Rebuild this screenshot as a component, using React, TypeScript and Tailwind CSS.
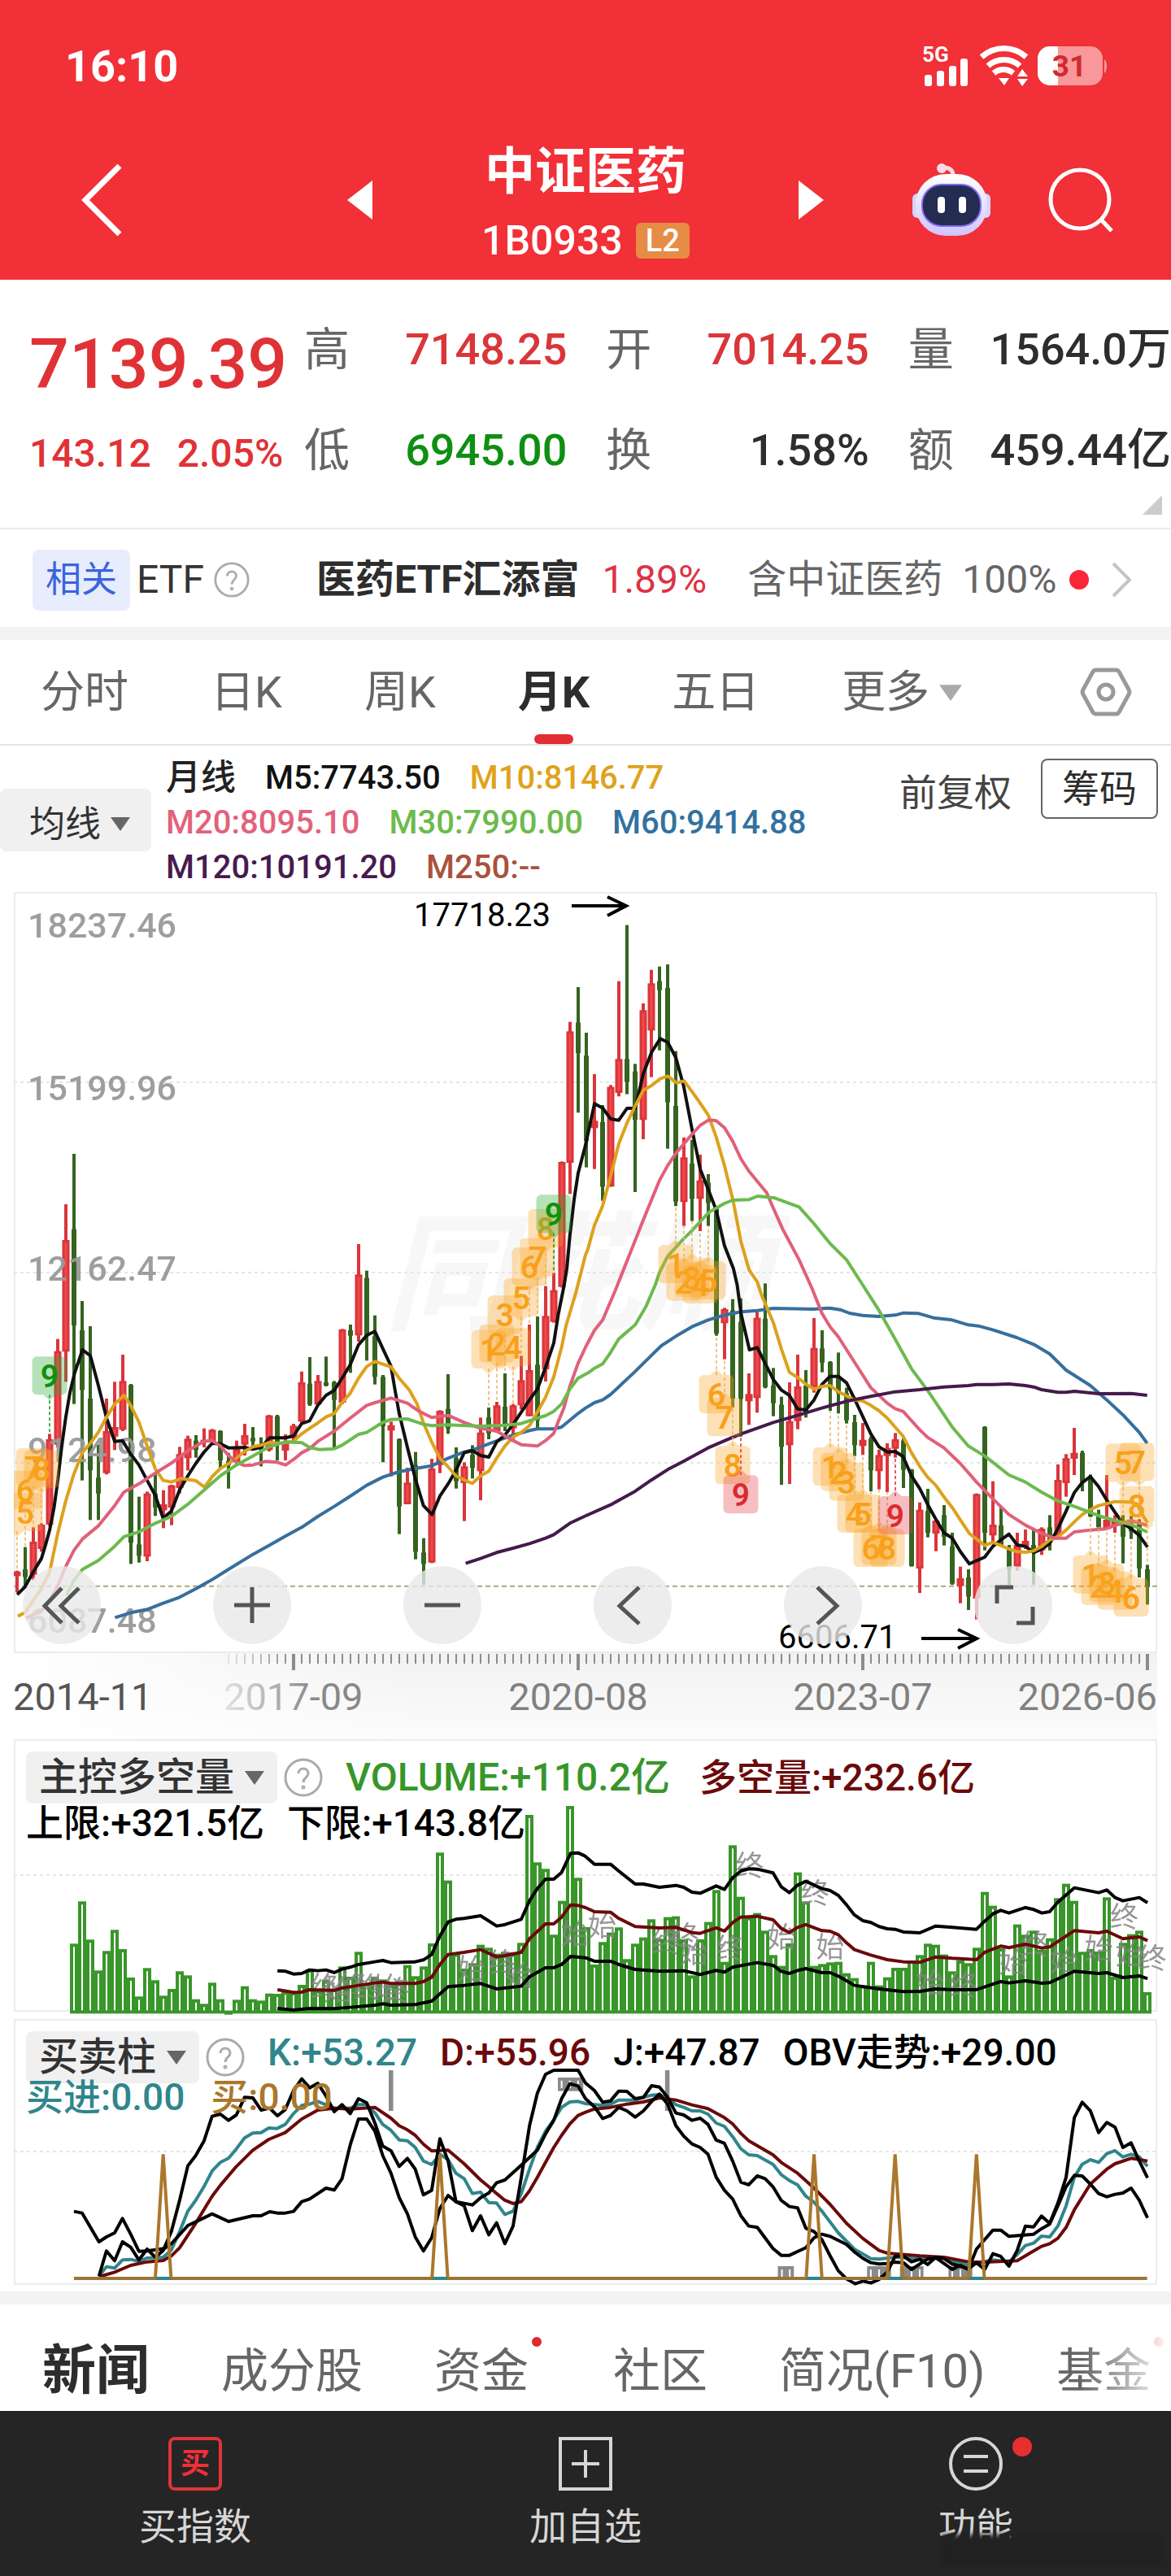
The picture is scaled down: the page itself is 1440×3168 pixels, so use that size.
import clsx from "clsx";
import type { ReactNode } from "react";

// One candle per month: colour, high, body top, body bottom, low
const CANDLES = `r 1055 1058 1075 1135;g 968 1050 1078 1110;r 895 948 1070 1090;r 880 885 975 985;r 550 570 885 890
r 200 245 590 600;r -297 -165 247 358;g -483 -205 150 440;g 60 168 388 722;g 153 420 685 868
g 590 712 770 868;r 420 540 695 700;r 358 525 560 610;r 258 355 535 540;g 366 370 952 1030
g 782 958 1000 1025;r 763 770 1003 1020;g 700 770 822 853;r 758 810 832 898;r 738 740 822 887
r 598 625 750 770;r 557 568 640 685;g 555 575 610 638;r 530 572 582 600;r 532 535 580 590
g 537 540 648 680;g 620 650 665 752;r 575 605 655 665;r 513 555 590 630;g 525 565 578 605
g 563 590 605 670;r 480 482 610 615;g 480 485 590 648;r 552 585 612 648;r 513 520 565 575
r 320 360 505 510;g 267 365 442 447;r 333 355 442 445;g 265 360 372 375;g 355 360 425 608
r 163 165 435 440;g 147 168 188 325;r -150 -38 187 210;g -52 -25 190 280;g 113 190 340 368
g 333 340 522 655;r 505 518 538 707;g 567 570 818 920;r 675 730 810 810;g 617 665 985 1013
g 935 988 1030 1107;r 642 678 1025 1027;r 463 465 665 695;g 330 458 530 550;g 600 640 725 752
r 655 670 732 872;g 592 628 675 715;r 490 545 688 795;g 453 490 548 570;r 432 445 540 545
g 327 450 520 540;r 440 445 530 575;r 262 352 445 460;r 147 315 485 485;g 117 295 500 530
r 5 115 312 357;r -43 20 137 140;r -455 -453 8 10;r -970 -935 -450 -335;g -1098 -967 -855 -635
g -930 -845 -530 -433;r -777 -605 -578 -427;g -663 -600 -362 -310;r -737 -730 -362 -362;r -1120 -833 -708 -695
g -1327 -833 -748 -703;g -815 -787 -608 -342;r -1038 -1013 -608 -537;r -1162 -1112 -938 -766;g -1174 -1120 -1087 -865
g -1182 -1095 -673 -502;g -862 -660 -307 -290;r -543 -470 -305 -217;g -535 -447 -317 -235;r -480 -385 -317 -198
g -408 -377 -302 -217;g -290 -288 180 188;r 85 90 142 275;g 53 95 420 453;g 50 137 420 560
r 327 403 430 517;r 95 122 418 472;g -5 125 378 382;g 307 372 437 485;g 413 443 598 738
r 360 503 592 735;r 258 375 503 533;g 315 372 475 490;r 123 233 380 398;g 168 235 287 323
g 282 285 385 465;g 250 345 400 475;g 380 400 500 512;g 480 507 592 632;r 510 572 595 628
g 560 568 685 762;r 608 628 688 755;r 585 602 632 765;r 547 570 605 638;g 567 575 683 750
g 680 683 1038 1040;r 803 830 1047 1137;g 753 835 915 932;r 865 870 918 983;g 813 850 930 962
g 915 965 1103 1107;r 1040 1083 1112 1175;g 1050 1080 1150 1200;r 770 772 1158 1235;g 522 525 915 980
r 725 885 925 950;g 822 888 965 965;g 960 975 1050 1107;r 915 960 1040 1055;r 903 945 965 975
g 900 960 985 1107;r 895 900 980 997;g 850 895 945 980;r 663 720 925 930;r 625 640 732 782
r 528 620 642 702;g 612 620 728 762;g 700 708 855 857;g 830 850 895 895;r 702 867 897 900
r 850 868 888 915;g 850 885 930 1028;g 853 880 910 938;g 865 875 1047 1080;g 1033 1050 1115 1180`
  .split(/[;\n]/)
  .map((row) => {
    const [color, ...values] = row.trim().split(" ");
    const [high, top, bottom, low] = values.map(Number);
    return { up: color === "r", high, top, bottom, low };
  });

const AVERAGES = [
  {
    color: "#376f9c",
    points:
      "308,1228 350,1210 394,1198 437,1175 481,1153 524,1122 568,1088 612,1050 677,995 720,962 764,928 808,895 851,855 895,818 938,780 982,740 1025,710 1069,690 1112,678 1156,668 1200,640 1243,617 1265,610 1309,587 1374,555 1418,538 1439,532 1483,532 1504,525 1548,475 1568,455 1592,435 1614,425 1635,405 1701,320 1745,260 1771,225 1810,190 1853,155 1896,130 1940,112 1985,100 2028,95 2071,87 2180,90 2223,86 2250,92 2275,105 2310,113 2354,117 2397,112 2420,104 2460,106 2500,122 2550,130 2593,148 2620,152 2660,167 2723,195 2768,220 2811,255 2855,315 2920,372 2964,425 3007,480 3051,545 3072,585",
  },
  {
    color: "#111111",
    points:
      "46,1143 67,1115 89,1060 111,1010 122,960 133,905 145,820 155,720 165,600 176,490 187,400 200,325 221,240 242,262 263,370 285,490 307,578 328,575 350,625 372,665 394,722 416,778 437,862 459,835 481,757 503,705 524,660 546,618 568,585 590,587 612,602 655,600 677,607 699,600 722,565 764,565 786,558 808,512 829,502 851,445 873,408 895,390 916,345 938,295 960,222 982,187 1004,172 1025,235 1047,300 1058,390 1069,475 1091,600 1112,715 1134,815 1157,848 1178,780 1200,735 1221,685 1243,620 1265,612 1287,630 1309,636 1330,580 1352,555 1374,515 1396,470 1418,425 1439,385 1461,305 1483,215 1495,110 1511,0 1518,-60 1526,-180 1538,-320 1548,-410 1567,-510 1592,-668 1614,-652 1635,-612 1657,-607 1679,-651 1701,-651 1723,-780 1745,-858 1768,-908 1788,-895 1810,-838 1831,-732 1853,-575 1875,-427 1897,-350 1918,-275 1940,-145 1964,-60 1974,0 1985,110 2007,240 2028,232 2049,290 2071,350 2092,388 2114,408 2136,458 2158,462 2180,425 2201,368 2223,338 2245,338 2267,362 2288,420 2310,485 2332,550 2354,598 2376,617 2397,615 2418,633 2441,705 2463,752 2484,810 2506,865 2528,915 2550,935 2572,985 2596,1030 2615,1018 2637,1005 2659,965 2680,942 2702,920 2724,960 2746,965 2768,988 2790,975 2811,955 2833,900 2855,835 2877,767 2898,730 2920,708 2942,745 2964,795 2986,840 3007,880 3029,900 3051,925 3073,968",
  },
  {
    color: "#dca11d",
    points:
      "48,1223 67,1210 89,1165 111,1120 133,1060 145,980 155,915 176,798 198,698 221,618 242,585 263,545 285,490 307,440 332,408 350,445 372,507 394,595 416,680 437,722 459,728 485,715 524,723 548,747 568,708 590,678 612,660 633,640 655,615 677,598 699,592 722,582 742,585 764,582 786,578 808,550 829,530 851,510 873,488 895,475 916,435 938,400 960,345 982,302 1004,283 1047,303 1069,345 1096,388 1117,440 1134,510 1156,580 1178,640 1200,672 1221,705 1243,720 1265,733 1287,705 1309,688 1330,640 1352,595 1374,562 1396,545 1418,520 1439,470 1461,415 1483,340 1504,230 1516,150 1543,25 1568,-110 1574,-130 1592,-220 1614,-292 1635,-400 1657,-520 1679,-597 1701,-660 1723,-718 1745,-735 1768,-760 1788,-770 1812,-745 1832,-752 1853,-713 1875,-670 1897,-625 1918,-545 1940,-440 1964,-305 1984,-160 2006,-55 2028,-10 2040,40 2071,140 2092,235 2114,323 2136,342 2158,367 2180,385 2201,375 2223,372 2245,395 2267,410 2288,425 2310,428 2332,445 2354,465 2376,492 2397,525 2418,558 2441,620 2463,670 2484,710 2506,740 2528,783 2550,822 2572,868 2596,918 2615,938 2637,962 2659,950 2680,962 2702,975 2724,985 2746,987 2768,982 2790,965 2811,942 2833,930 2855,905 2877,875 2898,848 2920,830 2942,815 2964,808 2986,800 3029,802 3045,810 3060,850 3073,878",
  },
  {
    color: "#e0607a",
    points:
      "69,1230 111,1205 133,1165 155,1110 176,1040 198,980 221,938 263,890 307,815 332,765 375,732 416,695 459,658 503,612 546,578 568,575 590,595 612,630 633,655 655,667 677,665 710,652 742,655 765,665 786,645 808,620 829,605 851,578 895,540 938,492 982,445 1004,435 1047,418 1091,437 1120,465 1156,490 1200,482 1243,508 1287,530 1330,540 1374,575 1396,590 1439,595 1461,575 1483,548 1495,505 1510,455 1526,375 1548,290 1570,225 1592,168 1614,130 1648,20 1723,-240 1766,-385 1788,-440 1810,-485 1853,-555 1875,-588 1898,-608 1918,-605 1940,-580 1962,-530 1984,-465 2005,-420 2053,-340 2075,-270 2096,-205 2140,-92 2175,15 2201,105 2223,155 2245,192 2288,285 2332,380 2376,437 2397,457 2419,468 2463,535 2484,563 2528,602 2572,660 2615,728 2659,790 2702,848 2746,887 2789,917 2823,935 2855,935 2877,912 2920,905 2964,900 2986,888 3029,870 3072,888",
  },
  {
    color: "#6cba4f",
    points:
      "178,1145 198,1090 221,1050 263,1018 307,965 332,930 372,912 416,880 459,855 503,810 546,758 590,705 633,665 677,632 720,598 764,580 808,583 829,600 855,608 895,605 916,592 960,552 982,545 1025,508 1047,497 1091,495 1134,515 1156,520 1200,517 1287,522 1352,518 1396,512 1439,492 1461,483 1483,467 1504,440 1526,385 1548,345 1575,325 1592,308 1614,292 1635,250 1657,200 1701,148 1730,80 1755,0 1766,-45 1788,-105 1831,-170 1853,-200 1898,-267 1940,-300 1962,-312 2005,-314 2029,-327 2075,-320 2140,-287 2180,-225 2223,-152 2267,-92 2310,0 2354,95 2397,200 2441,310 2484,390 2550,525 2593,595 2637,632 2659,655 2702,702 2746,728 2789,765 2833,798 2877,818 2942,852 2986,870 3029,885 3072,912",
  },
  {
    color: "#451a4d",
    points:
      "1247,1028 1287,1010 1330,988 1374,972 1418,955 1461,935 1483,922 1526,880 1568,853 1635,812 1701,762 1745,720 1788,682 1832,650 1896,602 1962,563 1985,550 2071,508 2136,482 2201,455 2267,430 2332,412 2397,395 2463,387 2528,377 2593,372 2615,368 2659,368 2702,366 2746,372 2768,377 2789,387 2833,397 2855,397 2877,393 2942,402 3029,401 3072,408",
  },
];

// month index, digit, centre of the tag
const ABOVE: [number, string, number][] = [
  [0, "5", 840], [1, "6", 758], [2, "7", 675], [3, "8", 682], [4, "9", 337],
  [58, "1", 240], [59, "2", 218], [60, "3", 112], [61, "4", 232], [62, "5", 48],
  [63, "6", -65], [64, "7", -100], [65, "8", -208], [66, "9", -260],
  [136, "5", 658], [138, "7", 655], [139, "8", 815],
];
const BELOW: [number, string, number][] = [
  [81, "1", -75], [82, "2", -10], [83, "3", -25], [84, "4", 0], [85, "5", -15],
  [86, "6", 405], [87, "7", 490], [88, "8", 667], [89, "9", 775],
  [100, "1", 672], [101, "2", 692], [102, "3", 728], [103, "4", 845], [104, "5", 845],
  [105, "6", 972], [106, "7", 965], [107, "8", 972], [108, "9", 852],
  [132, "1", 1070], [133, "2", 1112], [134, "3", 1102], [135, "4", 1130], [137, "6", 1155],
];

// starts at month 7
const VOLUMES = [
  868, 712, 853, 967, 895, 817, 888, 993, 1063, 958, 1003, 1060, 1035, 970, 985, 1073, 1090, 1012, 1073, 1115, 1075, 1025,
  1073, 1078, 1052, 1053, 1045, 1047, 1020, 963, 1040, 1002, 1035, 952, 990, 898, 1015, 990, 1000, 1020, 1010, 947, 988, 952,
  867, 532, 635, 905, 960, 940, 872, 883, 905, 898, 905, 865, 393, 568, 592, 835, 710, 360, 625, 807, 945, 862, 827, 808, 925,
  868, 845, 778, 850, 770, 767, 852, 985, 852, 788, 670, 935, 505, 695, 770, 755, 820, 910, 950, 867, 605, 712, 950, 943, 937,
  935, 977, 995, 1022, 935, 1022, 992, 957, 957, 930, 910, 868, 872, 908, 970, 930, 940, 883, 677, 728, 885, 985, 797, 835,
  820, 890, 848, 700, 647, 710, 898, 888, 897, 697, 990, 865, 833, 820, 1047,
];

const VOLUME_LINES = [
  {
    color: "#000",
    points:
      "743,968 765,970 786,980 808,978 829,965 851,968 873,965 895,975 916,962 938,955 960,945 1004,935 1025,930 1047,938 1112,935 1134,928 1156,908 1178,840 1200,788 1221,778 1243,775 1287,765 1330,803 1352,798 1396,778 1418,710 1439,665 1461,630 1483,630 1504,605 1528,535 1548,533 1567,545 1592,575 1635,575 1657,600 1701,648 1723,648 1766,660 1810,653 1831,660 1853,678 1875,682 1918,655 1940,668 1962,625 1984,600 2005,592 2028,593 2070,607 2092,658 2114,680 2136,652 2158,638 2201,665 2223,672 2245,690 2267,725 2288,762 2310,783 2332,790 2354,805 2376,813 2397,815 2419,825 2463,828 2506,803 2550,808 2615,815 2637,785 2659,758 2680,745 2702,755 2746,735 2768,742 2790,755 2811,750 2833,715 2877,662 2942,680 2964,670 2986,698 3007,710 3051,698 3073,717",
  },
  {
    color: "#6b0a0a",
    points:
      "743,1038 786,1048 808,1047 829,1038 895,1040 916,1032 960,1022 1004,1013 1025,1010 1047,1015 1112,1015 1134,1008 1156,992 1178,945 1200,908 1243,900 1287,890 1330,917 1352,912 1396,900 1418,850 1461,795 1483,795 1504,770 1528,725 1548,727 1568,735 1592,750 1635,752 1657,775 1701,805 1766,810 1810,808 1853,827 1875,830 1918,810 1940,822 1962,790 1984,770 2028,767 2070,780 2092,812 2114,827 2136,808 2158,798 2201,820 2223,822 2245,835 2267,865 2288,890 2332,910 2376,927 2419,935 2463,937 2506,917 2550,922 2615,927 2637,900 2680,877 2702,883 2746,870 2790,884 2811,880 2877,820 2942,828 2964,822 3007,850 3051,843 3073,857",
  },
  {
    color: "#000",
    points:
      "743,1107 786,1113 829,1107 895,1108 938,1103 1004,1095 1025,1090 1047,1095 1112,1093 1156,1080 1200,1027 1243,1022 1287,1015 1330,1035 1396,1025 1418,990 1461,957 1483,957 1504,945 1528,915 1568,920 1592,933 1635,933 1657,945 1701,963 1766,970 1831,968 1875,982 1918,967 1940,973 1962,955 2028,938 2070,948 2092,970 2114,978 2136,967 2158,960 2201,975 2223,975 2245,988 2267,1005 2288,1022 2354,1035 2419,1045 2463,1044 2506,1035 2550,1038 2615,1038 2680,1008 2702,1013 2746,1005 2790,1014 2811,1012 2877,970 2942,978 2964,975 3007,993 3051,987 3073,997",
  },
];

const SIGNALS: [string, number, number][] = [
  ["终", 870, 1025], ["始", 905, 1038], ["终", 945, 1020], ["终", 985, 1030], ["始", 1035, 1030], ["终", 1062, 1040],
  ["始", 1262, 960], ["终", 1345, 940], ["始", 1390, 985], ["始", 1540, 830], ["始", 1613, 800], ["终", 1783, 860],
  ["终", 1833, 840], ["始", 1858, 900], ["终", 1955, 885], ["终", 2008, 578], ["始", 2093, 843], ["终", 2183, 680],
  ["始", 2223, 880], ["始", 2490, 1010], ["终", 2580, 1020], ["始", 2713, 935], ["终", 2773, 870], ["始", 2850, 930],
  ["始", 2943, 885], ["终", 3011, 768], ["始", 3025, 905], ["终", 3086, 920],
];

const KDJ_LINES = [
  {
    color: "#2f868c",
    points:
      "265,985 285,950 307,955 328,925 350,923 372,930 394,918 437,915 459,888 481,820 503,745 524,705 546,655 568,597 590,565 612,550 633,515 655,475 677,457 699,455 720,438 742,440 764,425 786,385 808,355 829,350 851,340 895,365 938,365 960,352 982,352 1004,382 1025,425 1047,447 1069,482 1091,485 1112,510 1134,560 1156,573 1178,535 1200,555 1221,605 1243,625 1265,680 1287,675 1309,713 1330,715 1352,757 1374,745 1396,680 1418,590 1439,510 1461,450 1483,408 1504,362 1526,342 1548,340 1568,348 1614,355 1635,350 1657,335 1701,335 1745,317 1766,315 1788,330 1810,352 1831,362 1853,375 1875,375 1896,387 1918,420 1940,432 1962,470 1984,515 2005,537 2028,540 2070,572 2092,610 2114,632 2136,648 2158,690 2180,712 2201,745 2245,825 2288,885 2310,902 2332,920 2354,922 2397,915 2463,920 2528,918 2593,945 2659,925 2702,932 2724,905 2746,872 2768,863 2789,837 2811,840 2833,800 2855,725 2877,620 2898,572 2920,555 2942,565 2964,533 2986,522 3007,545 3029,535 3051,545 3073,580",
  },
  {
    color: "#6b0a0a",
    points:
      "265,987 307,970 350,945 394,932 437,927 459,910 481,880 524,790 568,690 590,650 633,580 677,520 720,480 764,455 808,405 851,372 895,365 938,368 1004,362 1047,402 1069,430 1091,445 1112,465 1134,498 1156,523 1200,520 1243,570 1287,630 1309,655 1330,680 1352,705 1374,717 1396,710 1418,670 1439,620 1461,565 1483,510 1504,465 1526,423 1548,392 1568,380 1592,368 1635,362 1679,350 1723,342 1766,327 1810,335 1853,353 1896,367 1940,400 1962,423 1984,458 2005,485 2070,537 2092,565 2136,605 2180,660 2223,720 2267,790 2310,845 2354,890 2376,900 2463,910 2528,915 2593,932 2637,933 2724,928 2768,892 2789,875 2811,865 2833,845 2855,805 2877,740 2920,645 2964,590 2986,570 3029,550 3073,560",
  },
  {
    color: "#000",
    points:
      "265,985 285,892 307,928 328,858 350,878 372,925 394,885 416,915 437,890 459,820 481,705 503,578 524,540 546,487 568,395 590,387 612,410 633,390 655,325 677,327 699,372 722,365 743,393 764,370 786,300 808,257 829,290 851,273 873,320 895,378 916,352 938,385 960,330 982,345 1004,420 1025,505 1047,522 1069,580 1091,550 1112,590 1134,685 1156,668 1178,478 1200,560 1221,710 1243,725 1265,817 1287,762 1309,832 1330,788 1352,865 1374,800 1396,620 1418,430 1439,310 1461,240 1483,225 1548,225 1568,272 1592,300 1614,343 1635,338 1657,302 1679,303 1701,330 1723,325 1745,282 1766,287 1788,325 1810,383 1831,390 1853,410 1875,402 1896,425 1918,483 1940,495 1962,560 1984,638 2005,648 2028,615 2049,625 2070,655 2092,705 2114,728 2136,733 2158,808 2180,820 2201,850 2223,910 2245,965 2267,995 2290,1013 2311,1003 2332,1010 2354,997 2376,970 2397,912 2419,910 2441,932 2463,922 2484,942 2506,915 2528,920 2550,940 2572,948 2593,958 2615,935 2637,960 2659,902 2680,912 2702,948 2724,890 2746,800 2768,803 2789,763 2811,790 2833,715 2855,620 2877,400 2898,343 2920,375 2942,455 2964,418 2986,435 3007,510 3029,493 3051,560 3073,622",
  },
  {
    color: "#000",
    points:
      "198,746 220,752 265,858 285,840 307,825 328,772 350,830 372,893 394,892 440,883 459,865 503,798 546,770 568,755 612,783 677,762 699,762 722,747 743,752 764,752 786,746 808,710 829,700 873,660 895,667 916,625 938,500 960,405 982,405 1004,450 1025,540 1047,605 1069,695 1091,755 1112,840 1134,892 1156,843 1178,735 1200,687 1221,710 1265,722 1287,695 1309,678 1330,640 1352,630 1396,575 1439,520 1461,460 1483,410 1504,330 1526,275 1548,283 1568,330 1592,360 1614,403 1635,392 1657,362 1679,375 1701,398 1723,375 1745,340 1766,313 1788,350 1810,430 1831,468 1853,497 1875,510 1896,535 1918,620 1940,668 1962,700 1984,762 2005,800 2028,805 2070,883 2092,908 2114,908 2158,880 2180,843 2201,830 2223,838 2267,868 2288,895 2310,918 2332,935 2354,940 2376,938 2397,933 2419,935 2441,960 2463,940 2484,922 2506,917 2528,938 2550,960 2572,945 2593,960 2615,885 2637,850 2659,815 2680,815 2702,838 2768,830 2789,810 2811,793 2833,725 2855,655 2877,613 2898,615 2920,645 2942,680 2964,692 2986,683 3007,678 3029,660 3051,705 3073,770",
  },
];

const BUY_SPIKES = [437, 1178, 2180, 2397, 2615];

const monthX = (i: number) => 4 + i * 10;
const priceY = (v: number) => 483 + v / 3;

function Lines({ lines }: { lines: { color: string; points: string }[] }) {
  return (
    <>
      {lines.map((line, i) => (
        <polyline
          key={i}
          points={line.points}
          fill="none"
          stroke={line.color}
          strokeWidth="4"
          strokeLinejoin="round"
          vectorEffect="non-scaling-stroke"
        />
      ))}
    </>
  );
}

function Tag({ index, digit, v, above }: { index: number; digit: string; v: number; above: boolean }) {
  const x = monthX(index);
  const cx = Math.min(Math.max(x, 14), 1381);
  const y = priceY(v);
  const candle = CANDLES[index];
  const color = digit !== "9" ? "#f9a01b" : above ? "#0d930d" : "#d92b31";
  const back = digit !== "9" ? "#fba72a" : above ? "#2bab35" : "#e8444c";
  const edge = above ? y + 23 : y - 24;
  return (
    <g>
      <line
        x1={x}
        x2={x}
        y1={edge}
        y2={priceY(above ? candle.high : candle.low)}
        stroke={digit === "9" ? color : "#e3b565"}
        strokeWidth="1.5"
        strokeDasharray="4 3"
      />
      <g fill={back} opacity="0.34">
        <rect x={cx - 21.5} y={y - 24} width="43" height="47" rx="6" />
        <path d={above ? `M${x - 8} ${edge}h16l-8 7z` : `M${x - 8} ${edge}h16l-8-7z`} />
      </g>
      <text x={cx} y={y + 14} textAnchor="middle" fontSize="39" fontWeight="600" fill={color}>
        {digit}
      </text>
    </g>
  );
}

function PriceChart() {
  const grid = [-747, -45, 657];
  const labels: [string, number][] = [
    ["18237.46", 56],
    ["15199.96", 256],
    ["12162.47", 478],
    ["9124.98", 701],
    ["6087.48", 911],
  ];
  return (
    <svg viewBox="0 0 1406 936" className="block h-auto w-full" role="img" aria-label="月K">
      <rect x="1" y="1" width="1404" height="934" fill="#fff" stroke="#ececec" strokeWidth="2" />
      <text x="455" y="526" fontSize="158" fontWeight="700" fontStyle="italic" fill="#f7f7f7">
        同花顺
      </text>
      {grid.map((v) => (
        <line key={v} x1="0" x2="1406" y1={priceY(v)} y2={priceY(v)} stroke="#e6e6e6" strokeWidth="2" strokeDasharray="4 4" />
      ))}
      <line x1="0" x2="1406" y1={priceY(1112)} y2={priceY(1112)} stroke="#b3a57c" strokeWidth="2" strokeDasharray="6 4" />
      {CANDLES.map((c, i) => (
        <g key={i} fill={c.up ? "#d9363b" : "#356420"}>
          <rect x={monthX(i) - 2} y={priceY(c.high)} width="4" height={(c.low - c.high) / 3} />
          <rect
            x={monthX(i) - (c.up ? 4.5 : 3)}
            y={priceY(c.top)}
            width={c.up ? 9 : 6}
            height={(c.bottom - c.top) / 3}
          />
          {c.up && c.bottom - c.top > 30 && (
            <rect x={monthX(i) - 1.5} y={priceY(c.top) + 3} width="3" height={(c.bottom - c.top) / 3 - 6} fill="#f0484c" />
          )}
        </g>
      ))}
      <g fontSize="43" fontWeight="500" fill="#999" opacity="0.95">
        {labels.map(([text, y]) => (
          <text key={text} x="17" y={y}>
            {text}
          </text>
        ))}
      </g>
      <g transform="translate(-17 483) scale(.4592 .3333)">
        <Lines lines={AVERAGES} />
      </g>
      {ABOVE.map(([index, digit, v]) => (
        <Tag key={index} index={index} digit={digit} v={v} above />
      ))}
      {BELOW.map(([index, digit, v]) => (
        <Tag key={index} index={index} digit={digit} v={v} above={false} />
      ))}
      <g fontSize="40" fill="#000">
        <text x="492" y="42">17718.23</text>
        <text x="940" y="930">6606.71</text>
      </g>
      <g stroke="#000" strokeWidth="4" fill="none">
        <path d="M686 17h67M730 6l23 11-23 12" />
        <path d="M1116 918h68M1161 907l23 11-23 12" />
      </g>
    </svg>
  );
}

function ChartControls() {
  const controls: [string, string][] = [
    ["最早", "M48 27 27 49 48 70M69 27 47 49 69 70"],
    ["放大", "M26 48h44M48 26v44"],
    ["缩小", "M26 48h44"],
    ["向左", "M56 26 32 49 56 71"],
    ["向右", "M41 26 65 49 41 71"],
    ["全屏", "M48 26H28V46M52 70H72V50"],
  ];
  return (
    <div className="absolute right-[129px] bottom-[11px] left-[11px] flex justify-between">
      {controls.map(([label, d]) => (
        <button key={label} type="button" aria-label={label} className="size-24 rounded-full bg-[#e8e8e8]/80">
          <svg viewBox="0 0 96 96" fill="none" stroke="#555" strokeWidth="5">
            <path d={d} />
          </svg>
        </button>
      ))}
    </div>
  );
}

function TimeAxis() {
  const months = Array.from({ length: 114 }, (_, i) => i + 26);
  return (
    <svg viewBox="0 0 1440 106" className="block h-auto w-full">
      <defs>
        <linearGradient id="axis-back">
          <stop offset="0" stopColor="#f2f2f2" stopOpacity="0" />
          <stop offset="0.35" stopColor="#f2f2f2" />
        </linearGradient>
        <linearGradient id="axis-down" x2="0" y2="1">
          <stop offset="0" stopColor="#fff" stopOpacity="0" />
          <stop offset="1" stopColor="#fff" stopOpacity="0.75" />
        </linearGradient>
        <linearGradient id="axis-text">
          <stop offset="0" stopColor="#e4e4e4" />
          <stop offset="0.65" stopColor="#888" />
        </linearGradient>
      </defs>
      <rect x="17" width="1406" height="106" fill="url(#axis-back)" />
      <rect x="17" width="1406" height="106" fill="url(#axis-down)" />
      {months.map((i) => {
        const major = [34, 69, 104, 139].includes(i);
        return (
          <rect
            key={i}
            x={20 + i * 10 + (major ? -1 : 0)}
            y="1"
            width={major ? 4 : 2}
            height={major ? 20 : 12}
            fill="#8c8c8c"
            opacity={Math.min(1, (i - 24) / 10)}
          />
        );
      })}
      <g fontSize="47" fill="#808080">
        <text x="16" y="70" fill="#555">2014-11</text>
        <text x="275" y="70" fill="url(#axis-text)">2017-09</text>
        <text x="711" y="70" textAnchor="middle">2020-08</text>
        <text x="1061" y="70" textAnchor="middle">2023-07</text>
        <text x="1423" y="70" textAnchor="end">2026-06</text>
      </g>
    </svg>
  );
}

function VolumeChart() {
  return (
    <svg viewBox="0 0 1406 335" className="block h-auto w-full overflow-visible" role="img" aria-label="主控多空量">
      <rect x="1" y="1" width="1404" height="333" fill="#fff" stroke="#ececec" strokeWidth="2" />
      <line x1="0" x2="1406" y1="167" y2="167" stroke="#e6e6e6" strokeWidth="2" strokeDasharray="4 4" />
      <g fill="#fff" stroke="#39962a" strokeWidth="4">
        {VOLUMES.map((v, i) => (
          <rect key={i} x={monthX(i + 7) - 3} y={v / 3 - 36} width="6" height={Math.max(1, (1120 - v) / 3 - 2)} />
        ))}
      </g>
      <g fontSize="35" fill="#858585" textAnchor="middle" opacity="0.85">
        {SIGNALS.map(([text, x, v], i) => (
          <text key={i} x={x / 2.178 - 17} y={v / 3 - 25}>
            {text}
          </text>
        ))}
      </g>
      <g transform="translate(-17 -38) scale(.4592 .3333)">
        <Lines lines={VOLUME_LINES} />
      </g>
    </svg>
  );
}

function KdjChart() {
  return (
    <svg viewBox="0 0 1406 327" className="block h-auto w-full overflow-visible" role="img" aria-label="买卖柱">
      <rect x="1" y="1" width="1404" height="325" fill="#fff" stroke="#ececec" strokeWidth="2" />
      <line x1="0" x2="1406" y1="163" y2="163" stroke="#e6e6e6" strokeWidth="2" strokeDasharray="4 4" />
      <g transform="translate(-17 -12) scale(.4592 .3333)">
        <g fill="#8a8a8a">
          <rect x="1041" y="225" width="12" height="150" />
          <rect x="1781" y="225" width="12" height="150" />
          <rect x="1494" y="252" width="68" height="50" />
          <rect x="2083" y="948" width="43" height="42" />
          <rect x="2322" y="948" width="64" height="42" />
          <rect x="2410" y="948" width="63" height="42" />
          <rect x="2540" y="948" width="64" height="42" />
        </g>
        <path
          d="M1504 263v28M1526 263v28M1548 263v28M2094 960v28M2115 960v28M2332 960v28M2354 960v28M2376 960v28M2441 960v28M2463 960v28M2550 960v28M2572 960v28"
          stroke="#fff"
          strokeWidth="2"
          vectorEffect="non-scaling-stroke"
        />
        <Lines lines={KDJ_LINES} />
        <path d="M198 993H3072" stroke="#9a7437" strokeWidth="4" vectorEffect="non-scaling-stroke" />
        {BUY_SPIKES.map((x) => (
          <g key={x} fill="none" strokeWidth="4" strokeLinejoin="bevel">
            <path d={`M${x - 20} 993h40`} stroke="#2f868c" vectorEffect="non-scaling-stroke" />
            <path d={`M${x - 21} 990L${x} 535l21 455`} stroke="#ab772c" vectorEffect="non-scaling-stroke" />
          </g>
        ))}
      </g>
    </svg>
  );
}

function Triangle({ className }: { className?: string }) {
  return (
    <svg viewBox="0 0 24 18" className={clsx("pointer-events-none shrink-0", className)} fill="currentColor">
      <path d="M0 1h24L12 18z" />
    </svg>
  );
}

function Help({ size }: { size: "sm" | "lg" }) {
  return (
    <button type="button" aria-label="说明" className={clsx("shrink-0 text-[#aaa]", size === "sm" ? "size-11" : "size-12")}>
      <svg viewBox="0 0 48 48" fill="none" stroke="currentColor" strokeWidth="3">
        <circle cx="24" cy="24" r="22" />
        <path d="M18 19c0-8 12-8 12 0 0 5-6 5-6 11" />
        <circle cx="24" cy="36" r="1" />
      </svg>
    </button>
  );
}

function IndicatorSelect({ id, label, name, className }: { id: string; label: string; name: string; className?: string }) {
  return (
    <div className={clsx("flex items-center rounded-lg bg-[#f0f0f0] text-[#333]", className)}>
      <label htmlFor={id} className="sr-only">
        {label}
      </label>
      <select id={id} className="h-16 appearance-none bg-transparent outline-none">
        <option>{name}</option>
      </select>
      <Triangle className="w-6 text-[#666]" />
    </div>
  );
}

function StatusBar() {
  return (
    <div className="flex h-[164px] items-center justify-between pr-[78px] pl-20">
      <span className="text-[54px] leading-none font-bold">16:10</span>
      <svg viewBox="0 0 228 52" className="w-[228px] overflow-visible" fill="#fff">
        <text x="0" y="20" fontSize="26" fontWeight="700">5G</text>
        <rect x="3" y="36" width="9" height="14" rx="3" />
        <rect x="18" y="31" width="9" height="19" rx="3" />
        <rect x="33" y="25" width="9" height="25" rx="3" />
        <rect x="47" y="16" width="9" height="34" rx="3" />
        <g fill="none" stroke="#fff" strokeWidth="7">
          <path d="M73 14c16-14 39-14 55 0" />
          <path d="M81 25c11-10 28-10 39 0" />
          <path d="M88 34c7-6 17-6 24 0" />
        </g>
        <path d="M94 40h13l-6 9z" />
        <path d="M117 38l6-9 7 9zM117 41h13l-7 9z" />
        <rect x="142" y="1" width="80" height="48" rx="15" opacity=".5" />
        <path d="M157 1h10v48h-10a15 15 0 0 1-15-15V16a15 15 0 0 1 15-15z" />
        <path d="M224 17c4 3 4 14 0 17z" opacity=".5" />
        <text x="181" y="38" textAnchor="middle" fontSize="37" fontWeight="700" fill="#cf2a30">31</text>
      </svg>
    </div>
  );
}

function Header() {
  return (
    <header className="bg-[#f13037] text-white">
      <StatusBar />
      <div className="grid h-[180px] grid-cols-[1fr_auto_1fr] items-center pb-4">
        <a href="#back" aria-label="返回" className="ml-[100px] w-[50px]">
          <svg viewBox="0 0 50 88" fill="none" stroke="#fff" strokeWidth="7">
            <path d="M47 2 5 44l42 42" />
          </svg>
        </a>
        <div className="-my-6 flex items-center gap-[134px]">
          <button type="button" aria-label="上一个">
            <svg viewBox="0 0 31 48" className="w-[31px]" fill="#fff">
              <path d="M31 0v48L0 24z" />
            </svg>
          </button>
          <div className="flex flex-col items-center pt-5">
            <h1 className="text-[62px] leading-[80px] font-bold">中证医药</h1>
            <div className="flex items-center gap-4 text-[50px] leading-[88px] font-medium">
              1B0933
              <span className="rounded-md bg-[#e58c45] px-3 text-[38px] leading-[44px]">L2</span>
            </div>
          </div>
          <button type="button" aria-label="下一个">
            <svg viewBox="0 0 31 48" className="w-[31px]" fill="#fff">
              <path d="M0 0v48l31-24z" />
            </svg>
          </button>
        </div>
        <div className="flex items-center justify-end gap-[70px] pr-[70px]">
          <button type="button" aria-label="智能助手">
            <svg viewBox="0 0 96 92" className="w-24">
              <defs>
                <linearGradient id="robot-shell" x2="0" y2="1">
                  <stop offset="0" stopColor="#fff" />
                  <stop offset="1" stopColor="#cfc4ff" />
                </linearGradient>
              </defs>
              <path d="M50 16c0-7-4-10-12-10" fill="none" stroke="#f5d7e3" strokeWidth="5" />
              <circle cx="36" cy="7" r="6" fill="#f7dbe6" />
              <rect x="0" y="38" width="12" height="30" rx="6" fill="#d5d4fb" />
              <rect x="84" y="38" width="12" height="30" rx="6" fill="#d5d4fb" />
              <rect x="4" y="14" width="88" height="76" rx="37" fill="url(#robot-shell)" />
              <rect x="12" y="27" width="72" height="51" rx="24" fill="#252c52" stroke="#7d6cf0" strokeWidth="2" />
              <rect x="31" y="42" width="9" height="20" rx="4" fill="#fff" />
              <rect x="57" y="42" width="9" height="20" rx="4" fill="#fff" />
            </svg>
          </button>
          <button type="button" aria-label="搜索">
            <svg viewBox="0 0 82 82" className="w-[82px]" fill="none" stroke="#fff" strokeWidth="5">
              <circle cx="40" cy="40" r="36" />
              <path d="m65 64 14 15" />
            </svg>
          </button>
        </div>
      </div>
    </header>
  );
}

function Stat({ label, value, className }: { label: string; value: string; className: string }) {
  return (
    <div className="flex items-center justify-between whitespace-nowrap">
      <dt className="text-[56px] text-[#666]">{label}</dt>
      <dd className={clsx("text-[54px] font-medium", className)}>{value}</dd>
    </div>
  );
}

function Quote() {
  return (
    <section className="relative flex h-[307px] border-b-2 border-[#ececec] pt-6 pl-9">
      <div className="w-[338px] shrink-0 text-[#e03236]">
        <p className="pt-8 text-[86px] leading-[96px] font-medium">7139.39</p>
        <p className="flex gap-8 pt-4 text-[48px] leading-[92px] font-medium">
          <span>143.12</span>
          <span>2.05%</span>
        </p>
      </div>
      <dl className="grid flex-1 grid-cols-3 content-start gap-x-12 leading-[124px]">
        <Stat label="高" value="7148.25" className="text-[#d9363a]" />
        <Stat label="开" value="7014.25" className="text-[#d9363a]" />
        <Stat label="量" value="1564.0万" className="text-[#2d2d2d]" />
        <Stat label="低" value="6945.00" className="text-[#0e8f12]" />
        <Stat label="换" value="1.58%" className="text-[#2d2d2d]" />
        <Stat label="额" value="459.44亿" className="text-[#2d2d2d]" />
      </dl>
      <svg viewBox="0 0 24 24" className="absolute right-[11px] bottom-4 w-6" fill="#ccc">
        <path d="M24 0v24H0z" />
      </svg>
    </section>
  );
}

function RelatedEtf() {
  return (
    <section className="flex h-[120px] items-center pt-1 pl-10 text-[48px] whitespace-nowrap">
      <span className="rounded-lg bg-[#e7edfc] px-4 text-[44px] leading-[75px] text-[#3a63df]">相关</span>
      <span className="mr-3 ml-2 text-[#333]">ETF</span>
      <Help size="sm" />
      <a href="#etf" className="ml-[82px] flex flex-1 items-center">
        <span className="font-bold text-[#2d2d2d]">医药ETF汇添富</span>
        <span className="ml-7 text-[#dc3345]">1.89%</span>
        <span className="ml-[50px] text-[#666]">含中证医药</span>
        <span className="ml-6 text-[#666]">100%</span>
        <span className="ml-4 size-6 rounded-full bg-[#fb2638]" />
        <svg viewBox="0 0 24 44" className="ml-7 w-6" fill="none" stroke="#c4c4c4" strokeWidth="4">
          <path d="m2 2 20 20L2 42" />
        </svg>
      </a>
    </section>
  );
}

function PeriodTabs() {
  const tabs = ["分时", "日K", "周K", "月K", "五日"];
  return (
    <nav className="flex h-[130px] items-stretch border-b-2 border-[#e4e4e4] pr-12 pl-[50px] text-[54px] text-[#666]">
      <div className="flex gap-[101px]">
        {tabs.map((tab) => (
          <button
            key={tab}
            type="button"
            className={clsx("relative", tab === "月K" && "font-bold text-[#2d2d2d]")}
          >
            {tab}
            {tab === "月K" && (
              <span className="absolute bottom-0 left-1/2 h-3 w-12 -translate-x-1/2 rounded-full bg-[#e22e33]" />
            )}
          </button>
        ))}
        <button type="button" aria-haspopup="menu" className="flex items-center gap-3">
          更多
          <Triangle className="w-7 text-[#aaa]" />
        </button>
      </div>
      <button type="button" aria-label="设置" className="ml-auto">
        <svg viewBox="0 0 64 60" className="w-16" fill="none" stroke="#999" strokeWidth="5">
          <path d="M19 3h26a4 4 0 0 1 3 2l12 22a6 6 0 0 1 0 6L48 55a4 4 0 0 1-3 2H19a4 4 0 0 1-3-2L4 33a6 6 0 0 1 0-6L16 5a4 4 0 0 1 3-2z" />
          <circle cx="32" cy="30" r="9" />
        </svg>
      </button>
    </nav>
  );
}

function MovingAverages() {
  return (
    <section className="flex h-[180px] justify-between pr-4">
      <div className="flex">
        <div className="pt-[53px]">
          <IndicatorSelect id="average" label="均线类型" name="均线" className="h-[77px] w-[186px] gap-3 pt-2 pl-9 text-[44px]" />
        </div>
        <div className="ml-[18px] pt-3 text-[40px] leading-[55px] font-medium whitespace-nowrap">
          <p className="flex gap-9">
            <span className="text-[43px] text-[#222]">月线</span>
            <span className="text-[#111]">M5:7743.50</span>
            <span className="text-[#e0a21b]">M10:8146.77</span>
          </p>
          <p className="flex gap-9">
            <span className="text-[#e2627a]">M20:8095.10</span>
            <span className="text-[#6cbb4d]">M30:7990.00</span>
            <span className="text-[#33719f]">M60:9414.88</span>
          </p>
          <p className="flex gap-9">
            <span className="text-[#471a4f]">M120:10191.20</span>
            <span className="text-[#a9523c]">M250:--</span>
          </p>
        </div>
      </div>
      <div className="flex items-start gap-9 pt-4 text-[46px]">
        <button type="button" className="pt-2 text-[#444]">前复权</button>
        <button type="button" className="rounded-lg border-2 border-[#666] px-6 leading-[70px] text-[#2d2d2d]">
          筹码
        </button>
      </div>
    </section>
  );
}

function Panel({ children, chart, className }: { children: ReactNode; chart: ReactNode; className?: string }) {
  return (
    <section className={clsx("relative mx-[17px]", className)}>
      {chart}
      <div className="absolute top-[15px] left-[15px] text-[46px] font-medium whitespace-nowrap">{children}</div>
    </section>
  );
}

function NewsTabs() {
  const tabs = ["成分股", "资金", "社区", "简况(F10)", "基金"];
  return (
    <nav className="relative flex h-[131px] items-center gap-[88px] overflow-hidden pt-8 pl-[52px] text-[58px] leading-[76px] whitespace-nowrap text-[#666]">
      <button type="button" className="text-[66px] font-bold text-[#2d2d2d]">
        新闻
      </button>
      {tabs.map((tab) => {
        const unread = tab === "资金" || tab === "基金";
        return (
          <button key={tab} type="button" className={clsx("relative", unread && "pr-4")}>
            {tab}
            {unread && <span className="absolute -top-1 right-0 size-3 rounded-full bg-[#e0282e]" />}
          </button>
        );
      })}
      <span className="pointer-events-none absolute inset-y-0 right-0 w-[110px] bg-linear-to-r from-white/0 to-white" />
    </nav>
  );
}

function BottomBar() {
  return (
    <nav className="relative grid h-[204px] grid-cols-3 overflow-hidden bg-[#252525] pt-8 text-[46px] leading-[64px] text-[#d6d6d6]">
      <button type="button" className="flex flex-col items-center gap-3">
        <span className="flex size-[66px] items-center justify-center rounded-lg border-4 border-[#dd343a] text-[36px] font-bold text-[#f02f3a]">
          买
        </span>
        买指数
      </button>
      <button type="button" className="flex flex-col items-center gap-3">
        <svg viewBox="0 0 66 66" className="size-[66px]" fill="none" stroke="#d6d6d6" strokeWidth="4">
          <path d="M2 2h62v62H2zM33 16v34M16 33h34" />
        </svg>
        加自选
      </button>
      <button type="button" className="flex flex-col items-center gap-3">
        <span className="relative">
          <svg viewBox="0 0 66 66" className="size-[66px]" fill="none" stroke="#d6d6d6" strokeWidth="4">
            <circle cx="33" cy="33" r="31" />
            <path d="M18 24h30M18 42h30" />
          </svg>
          <span className="absolute top-0 -right-9 size-6 rounded-full bg-[#e5302f]" />
        </span>
        功能
      </button>
      <span className="pointer-events-none absolute right-3 bottom-3 h-10 w-[272px] rounded-md bg-[#212121] blur-[3px]" />
    </nav>
  );
}

export default function App() {
  return (
    <div className="min-h-screen w-full overflow-hidden bg-white font-[Roboto,'Noto_Sans_CJK_SC',sans-serif]">
      <Header />
      <Quote />
      <RelatedEtf />
      <div className="h-4 bg-[#f3f3f3]" />
      <PeriodTabs />
      <MovingAverages />
      <div className="relative mx-[17px]">
        <PriceChart />
        <ChartControls />
      </div>
      <TimeAxis />
      <Panel chart={<VolumeChart />}>
        <div className="flex items-center gap-2 leading-[64px]">
          <IndicatorSelect id="volume" label="副图指标一" name="主控多空量" className="gap-3 px-4 text-[48px]" />
          <Help size="lg" />
          <span className="ml-5 text-[48px] text-[#37962a]">VOLUME:+110.2亿</span>
          <span className="ml-7 text-[#6b0a0a]">多空量:+232.6亿</span>
        </div>
        <div className="flex gap-7 leading-[48px]">
          <span>上限:+321.5亿</span>
          <span>下限:+143.8亿</span>
        </div>
      </Panel>
      <Panel className="mt-[9px]" chart={<KdjChart />}>
        <div className="flex items-start gap-2 leading-[52px]">
          <IndicatorSelect id="kdj" label="副图指标二" name="买卖柱" className="gap-3 px-4 text-[48px]" />
          <div className="flex py-2">
            <Help size="lg" />
          </div>
          <span className="ml-5 text-[#2f868c]">K:+53.27</span>
          <span className="ml-5 text-[#6b0a0a]">D:+55.96</span>
          <span className="ml-5">J:+47.87</span>
          <span className="ml-5">OBV走势:+29.00</span>
        </div>
        <div className="flex gap-8 leading-[34px]">
          <span className="text-[#2f868c]">买进:0.00</span>
          <span className="text-[#ab772c]">买:0.00</span>
        </div>
      </Panel>
      <div className="mt-2 h-4 bg-[#f3f3f3]" />
      <NewsTabs />
      <BottomBar />
    </div>
  );
}
